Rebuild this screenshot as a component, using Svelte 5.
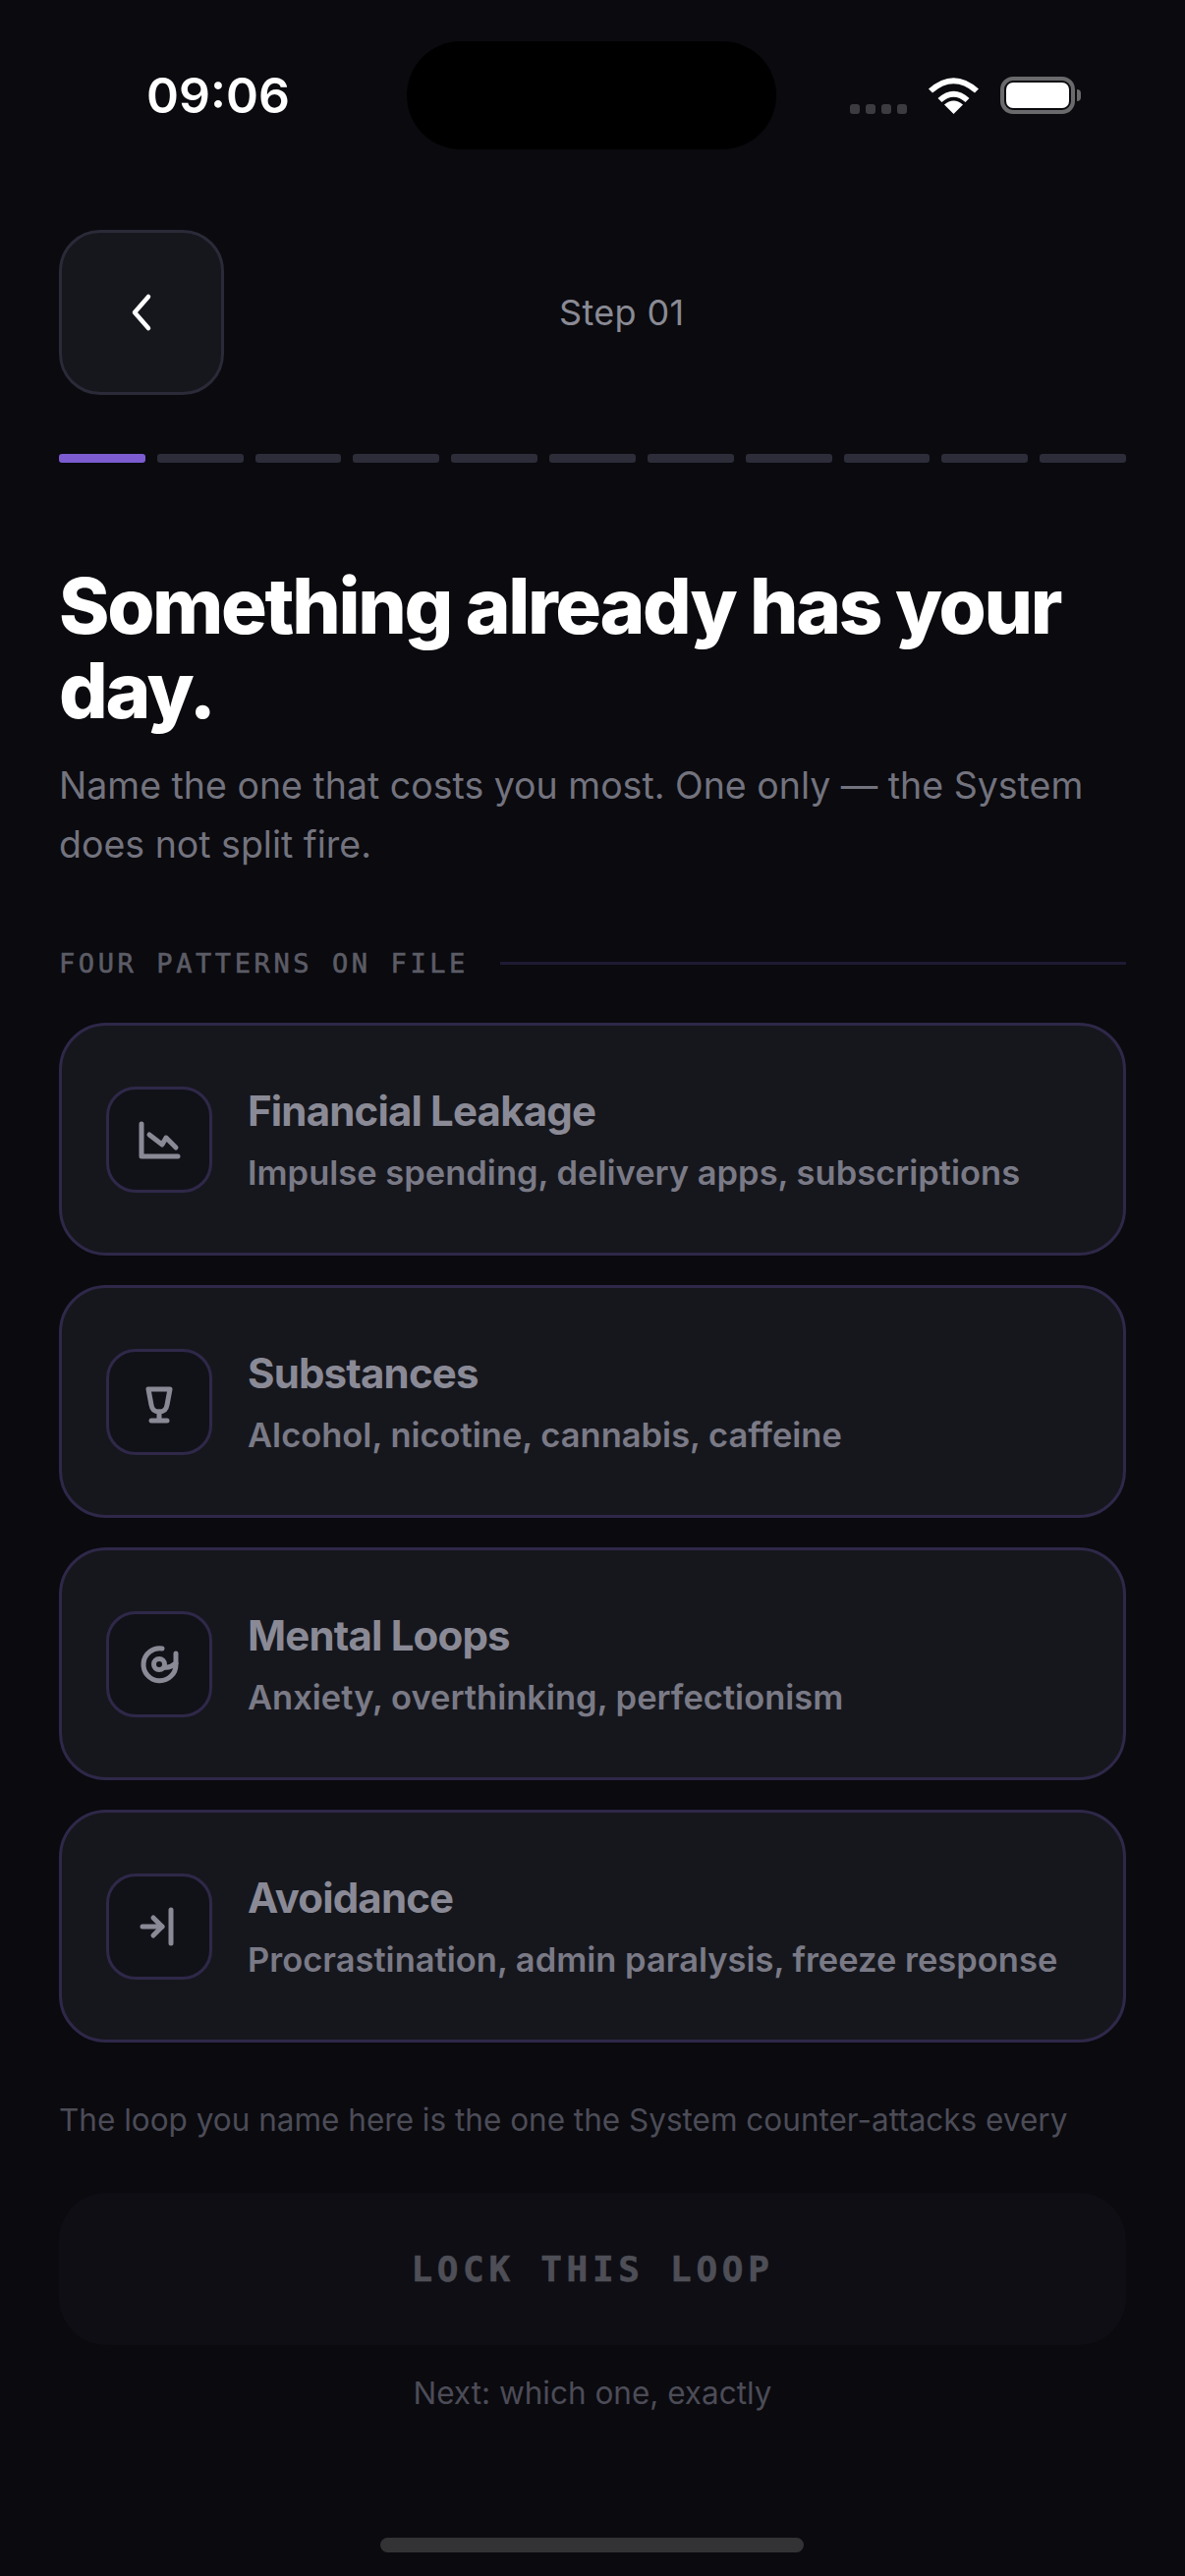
<script>
  const steps = Array.from({ length: 11 }, (_, i) => i);
  const loops = [
    { id: 'financial', title: 'Financial Leakage', desc: 'Impulse spending, delivery apps, subscriptions' },
    { id: 'substances', title: 'Substances', desc: 'Alcohol, nicotine, cannabis, caffeine' },
    { id: 'mental', title: 'Mental Loops', desc: 'Anxiety, overthinking, perfectionism' },
    { id: 'avoidance', title: 'Avoidance', desc: 'Procrastination, admin paralysis, freeze response' }
  ];
</script>

<div class="screen">
  <div class="status">
    <span class="time">09:06</span>
    <div class="island"></div>
    <div class="indicators">
      <div class="signal"><i></i><i></i><i></i><i></i></div>
      <svg class="wifi" width="51" height="37" viewBox="0 0 51 37">
        <path d="M25.5 37 L16 27.5 Q25.5 19.5 35 27.5 Z" fill="#fff" />
        <path d="M9.5 21 Q25.5 6.5 41.5 21 L37.5 25 Q25.5 14.5 13.5 25 Z" fill="#fff" />
        <path d="M0 11.5 Q25.5 -11 51 11.5 L47 15.5 Q25.5 -3 4 15.5 Z" fill="#fff" />
      </svg>
      <div class="battery"><div class="charge"></div><div class="nub"></div></div>
    </div>
  </div>

  <main class="content">
    <div class="topbar">
      <button class="back" aria-label="Back">
        <svg width="54" height="54" viewBox="0 0 54 54" fill="none" stroke="#fff" stroke-width="4.5" stroke-linecap="round" stroke-linejoin="round">
          <path d="M34 11 L20 27 L34 43" />
        </svg>
      </button>
      <span class="step">Step 01</span>
    </div>

    <div class="progress">
      {#each steps as s}
        <div class="seg" class:active={s === 0}></div>
      {/each}
    </div>

    <h1>Something already has your day.</h1>
    <p class="lead">Name the one that costs you most. One only — the System does not split fire.</p>

    <div class="label">
      <span>FOUR PATTERNS ON FILE</span>
      <div class="rule"></div>
    </div>

    <div class="cards">
      {#each loops as loop}
        <div class="card">
          <div class="icon">
            <svg width="54" height="54" viewBox="0 0 54 54" fill="none" stroke="#8a8a96" stroke-width="5" stroke-linecap="round" stroke-linejoin="round">
              {#if loop.id === 'financial'}
                <path d="M9 11 V44 H46" />
                <path d="M17 22 L30 32 L34 25 L44 35" />
              {:else if loop.id === 'substances'}
                <path d="M16 14 H38 L35 30 Q34 37 27 37 Q20 37 19 30 Z" />
                <path d="M27 37 V45" />
                <path d="M19 46 H35" />
              {:else if loop.id === 'mental'}
                <path d="M30 11 A16.5 16.5 0 1 0 44 27 V16" />
                <circle cx="27" cy="27" r="5.5" />
                <path d="M32 30 Q38 31 44 26" />
              {:else}
                <path d="M10 27 H30" />
                <path d="M21 18 L30 27 L21 36" />
                <path d="M39 10 V44" />
              {/if}
            </svg>
          </div>
          <div class="text">
            <div class="title">{loop.title}</div>
            <div class="desc">{loop.desc}</div>
          </div>
        </div>
      {/each}
    </div>

    <p class="note">The loop you name here is the one the System counter-attacks every</p>

    <button class="lock" disabled>LOCK THIS LOOP</button>
    <p class="next">Next: which one, exactly</p>
  </main>

  <div class="home"></div>
</div>

<style>
  :global(body) {
    margin: 0;
    background: #0a0a0f;
  }

  .screen {
    width: 1206px;
    height: 2622px;
    background: #0a0a0f;
    font-family: Inter, "Liberation Sans", sans-serif;
    display: flex;
    flex-direction: column;
    overflow: hidden;
  }

  .status {
    height: 234px;
    display: grid;
    grid-template-columns: 414px 376px 1fr;
    align-items: start;
    box-sizing: border-box;
    padding-top: 42px;
  }

  .time {
    font-size: 50px;
    font-weight: 600;
    color: #fff;
    line-height: 110px;
    text-align: center;
    padding-left: 30px;
  }

  .island {
    height: 110px;
    border-radius: 55px;
    background: #000;
  }

  .indicators {
    display: flex;
    align-items: flex-end;
    padding: 36px 0 0 75px;
  }

  .signal {
    display: flex;
    gap: 6px;
  }

  .signal i {
    width: 10px;
    height: 10px;
    border-radius: 3px;
    background: #3c3c40;
  }

  .wifi {
    margin-left: 22px;
  }

  .battery {
    position: relative;
    width: 76px;
    height: 38px;
    box-sizing: border-box;
    margin-left: 22px;
    border: 4px solid #6a6a6c;
    border-radius: 13px;
    padding: 2px;
  }

  .charge {
    height: 100%;
    background: #fff;
    border-radius: 7px;
  }

  .nub {
    position: absolute;
    right: -10px;
    top: 9px;
    width: 4px;
    height: 12px;
    background: #6a6a6c;
    border-radius: 0 4px 4px 0;
  }

  .content {
    flex: 1;
    padding: 0 60px;
    display: flex;
    flex-direction: column;
  }

  .topbar {
    display: flex;
    align-items: center;
    height: 168px;
  }

  .back {
    width: 168px;
    height: 168px;
    padding: 0;
    box-sizing: border-box;
    background: #16171d;
    border: 3px solid #2a2a38;
    border-radius: 42px;
    display: flex;
    align-items: center;
    justify-content: center;
  }

  .step {
    margin-left: 341px;
    font-size: 36px;
    letter-spacing: 0.36px;
    color: #8a8a94;
  }

  .progress {
    display: flex;
    gap: 12px;
    margin-top: 60px;
  }

  .seg {
    flex: 1;
    height: 9px;
    border-radius: 3px;
    background: #2d2d3a;
  }

  .seg.active {
    background: #7c5cd0;
  }

  h1 {
    margin: 103px 0 0;
    font-size: 78px;
    font-weight: 800;
    line-height: 86px;
    letter-spacing: -2.34px;
    color: #fff;
  }

  .lead {
    margin: 24px 0 0;
    font-size: 37.5px;
    line-height: 60px;
    color: #73737e;
  }

  .label {
    display: flex;
    align-items: center;
    gap: 32px;
    margin-top: 70px;
    height: 40px;
    font-family: "DejaVu Sans Mono", "Liberation Mono", monospace;
    font-size: 27px;
    letter-spacing: 3.6px;
    color: #5c5c66;
    -webkit-text-stroke: 0.6px #5c5c66;
  }

  .rule {
    flex: 1;
    height: 3px;
    background: #1f1b33;
  }

  .cards {
    display: flex;
    flex-direction: column;
    gap: 30px;
    margin-top: 41px;
  }

  .card {
    height: 237px;
    box-sizing: border-box;
    display: flex;
    align-items: center;
    gap: 36px;
    padding: 0 45px;
    background: #16171d;
    border: 3px solid #2f2849;
    border-radius: 48px;
  }

  .icon {
    width: 108px;
    height: 108px;
    flex: none;
    box-sizing: border-box;
    display: flex;
    align-items: center;
    justify-content: center;
    background: #111218;
    border: 3px solid #2f2849;
    border-radius: 30px;
  }

  .title {
    font-size: 42px;
    font-weight: 700;
    line-height: 50px;
    letter-spacing: -0.84px;
    color: #8a8a96;
  }

  .desc {
    margin-top: 18px;
    font-size: 34.5px;
    font-weight: 600;
    line-height: 40px;
    color: #7a7a86;
  }

  .note {
    margin: 54px 0 0;
    font-size: 31.5px;
    line-height: 50px;
    color: #4c4c57;
    white-space: nowrap;
  }

  .lock {
    height: 155px;
    margin-top: 49px;
    border: none;
    border-radius: 48px;
    background: #0e0e14;
    color: #4e4e57;
    font-family: "DejaVu Sans Mono", "Liberation Mono", monospace;
    font-size: 36px;
    font-weight: 700;
    letter-spacing: 4.7px;
    -webkit-text-stroke: 0.6px #4e4e57;
  }

  .next {
    margin: 24px 0 0;
    font-size: 31.5px;
    line-height: 50px;
    text-align: center;
    color: #4c4c57;
  }

  .home {
    position: fixed;
    left: 387px;
    top: 2583px;
    width: 431px;
    height: 15px;
    border-radius: 8px;
    background: #333336;
  }
</style>
